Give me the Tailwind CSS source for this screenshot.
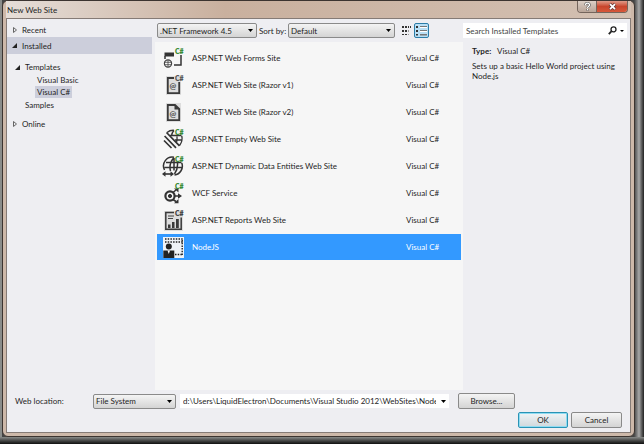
<!DOCTYPE html>
<html lang="en">
<head>
  <meta charset="UTF-8">
  <meta name="viewport" content="width=device-width, initial-scale=1.0">
  <title>New Web Site</title>
  <script src="https://cdn.jsdelivr.net/npm/@tailwindcss/browser@4"></script>
</head>
<body class="flex min-h-screen flex-col bg-linear-to-t from-[#111] to-[#8a8c8a] to-[7px] pb-[7px] pl-[2px] font-[Lato,'Open_Sans',sans-serif] text-[8px] leading-[12px] text-[#1e1e1e]">
  <div class="flex flex-1 bg-linear-to-l from-[#222] via-[#aaa] via-[5px] to-[#444] to-[10px] pr-[9px]">
    <!-- Window frame -->
    <div class="flex flex-1 flex-col rounded-md border border-[#3c3430] bg-[#cdb8a9] px-[3px] pb-[3px]">
      <header class="flex h-[17px] items-start justify-between bg-linear-to-r from-[#e6ded8] via-[#c9b09e] via-35% to-[#d3c0b2]">
        <h1 class="pt-[3px] pl-[1px]">New Web Site</h1>
        <div class="mr-[3px] flex h-[12px] overflow-hidden rounded-b-sm border border-t-0 border-[#74655c]">
          <button type="button" aria-label="Help" class="flex w-[19px] items-center justify-center border-r border-[#74655c] bg-linear-to-b from-[#dccfc6] to-[#b9a598]">
            <svg class="size-[9px]" viewBox="0 0 9 9" fill="none"><path d="M2.5 3.2C2.5 .6 6.6 .6 6.6 3 6.6 4.4 4.6 4.3 4.6 6M4.6 7V8.4" stroke="#555" stroke-width="2.4"/><path d="M2.5 3.2C2.5 .6 6.6 .6 6.6 3 6.6 4.4 4.6 4.3 4.6 6M4.6 7V8.2" stroke="#fff" stroke-width="1.3"/></svg>
          </button>
          <button type="button" aria-label="Close" class="flex w-[30px] items-center justify-center bg-linear-to-b from-[#e09a88] via-[#c8452c] to-[#d8583a]">
            <svg class="size-[9px]" viewBox="0 0 9 9"><path d="M1.8 2 7.2 7.4M7.2 2 1.8 7.4" stroke="#6b3a34" stroke-width="3.2"/><path d="M2 2.2 7 7.2M7 2.2 2 7.2" stroke="#fff" stroke-width="1.8"/></svg>
          </button>
        </div>
      </header>

      <main class="flex flex-1 flex-col border border-[#857b76] bg-[#eeeef2]">
        <div class="flex flex-1">
          <!-- Category tree -->
          <nav class="flex w-[145px] flex-none flex-col items-stretch pt-[3px]">
            <button type="button" class="flex h-[15px] items-center gap-[5px] pl-[6px]">
              <svg class="h-[6px] w-[4px]" viewBox="0 0 4 6" fill="none"><path d="M.5 .5 3.5 3 .5 5.5Z" stroke="#666"/></svg>Recent
            </button>
            <button type="button" class="flex h-[17px] items-center gap-[5px] bg-[#cccedb] pl-[5px]">
              <svg class="size-[5px]" viewBox="0 0 5 5"><path d="M5 0V5H0Z" fill="#222"/></svg>Installed
            </button>
            <ul class="flex flex-col items-start pt-[7px] pb-[6px]">
              <li><button type="button" class="flex h-[12px] items-center gap-[5px] pl-[8px]"><svg class="size-[5px]" viewBox="0 0 5 5"><path d="M5 0V5H0Z" fill="#222"/></svg>Templates</button>
                <ul class="pl-[28px]">
                  <li><button type="button" class="block h-[13px] px-[2px]">Visual Basic</button></li>
                  <li><button type="button" class="block h-[12px] bg-[#cccedb] px-[2px]">Visual C#</button></li>
                </ul>
              </li>
              <li><button type="button" class="block h-[13px] pl-[18px]">Samples</button></li>
            </ul>
            <button type="button" class="flex h-[14px] items-center gap-[5px] pl-[6px]">
              <svg class="h-[6px] w-[4px]" viewBox="0 0 4 6" fill="none"><path d="M.5 .5 3.5 3 .5 5.5Z" stroke="#666"/></svg>Online
            </button>
          </nav>

          <!-- Template list -->
          <section class="ml-[3px] flex flex-1 flex-col">
            <div class="flex h-[23px] items-center pl-[2px]">
              <div class="grid w-[100px] items-center">
                <select aria-label="Framework" class="col-start-1 row-start-1 h-[15px] appearance-none rounded-xs border border-[#8a8a8a] bg-linear-to-b from-[#f4f4f4] to-[#d4d4d4] pl-[2px]"><option>.NET Framework 4.5</option></select>
                <svg class="pointer-events-none col-start-1 row-start-1 mr-[4px] h-[3px] w-[5px] justify-self-end" viewBox="0 0 5 3"><path d="M0 0H5L2.5 3Z"/></svg>
              </div>
              <label for="sort" class="w-[31px] pl-[2px] whitespace-nowrap">Sort by:</label>
              <div class="grid w-[107px] items-center">
                <select id="sort" class="col-start-1 row-start-1 h-[15px] appearance-none rounded-xs border border-[#8a8a8a] bg-linear-to-b from-[#f4f4f4] to-[#d4d4d4] pl-[2px]"><option>Default</option></select>
                <svg class="pointer-events-none col-start-1 row-start-1 mr-[4px] h-[3px] w-[5px] justify-self-end" viewBox="0 0 5 3"><path d="M0 0H5L2.5 3Z"/></svg>
              </div>
              <button type="button" aria-label="Small icons" class="ml-[4px] flex size-[15px] items-center justify-center">
                <svg class="size-[11px]" viewBox="0 0 11 11" fill="#333"><path d="M1 1H3V3H1ZM4 1H6V3H4ZM7 1H8V3H7ZM9 1H10V3H9ZM1 5H3V7H1ZM4 5H6V7H4ZM1 9H3V10H1ZM4 9H6V10H4Z"/><path d="M7 5H8V7H7ZM7 9H8V10H7Z" fill="#999"/></svg>
              </button>
              <button type="button" aria-label="Medium icons" class="flex size-[15px] items-center justify-center rounded-xs border border-[#2c7da8] bg-[#b9dff5]">
                <svg class="size-[11px]" viewBox="0 0 11 11" fill="#333"><path d="M0 1H2V3H0ZM0 5H2V7H0ZM0 9H2V10.5H0Z"/><path d="M4 1H11V3H4ZM4 5H11V7H4ZM4 9H11V10.5H4Z" fill="#777"/><path d="M4 2H11V3H4ZM4 6H11V7H4Z" fill="#fff"/></svg>
              </button>
            </div>
            <ul class="flex-1 bg-[#f6f6f6] pt-[2px] pl-[2px]">
              <li><button type="button" class="grid h-[27px] w-full grid-cols-[30px_1fr_57px] items-center pl-[5px] text-left">
                <svg class="size-[24px]" viewBox="0 0 24 24" fill="none"><path d="M2.5 6.5H12V10.5H2.5Z" fill="#333"/><path d="M3 10V13M19 9V19H12" stroke="#333" stroke-width="1.5"/><circle cx="6" cy="17.5" r="3.6" stroke="#444" stroke-width="1.2"/><path d="M2.5 16.3H9.5M2.5 18.7H9.5M6 14V21" stroke="#444" stroke-width=".8"/><text x="13" y="8" font-size="7" font-weight="800" fill="#388a34">C#</text></svg>
                <span>ASP.NET Web Forms Site</span><span>Visual C#</span></button></li>
              <li><button type="button" class="grid h-[27px] w-full grid-cols-[30px_1fr_57px] items-center pl-[5px] text-left">
                <svg class="size-[24px]" viewBox="0 0 24 24" fill="none"><path d="M4 3H19V22H4Z" fill="#ddd"/><path d="M12 5H5.8V20.2H17.2V9" stroke="#3a3a3a" stroke-width="1.8"/><text x="7.5" y="16" font-size="8" font-weight="700" fill="#444">@</text><text x="13" y="8" font-size="7" font-weight="800" fill="#555">C#</text></svg>
                <span>ASP.NET Web Site (Razor v1)</span><span>Visual C#</span></button></li>
              <li><button type="button" class="grid h-[27px] w-full grid-cols-[30px_1fr_57px] items-center pl-[5px] text-left">
                <svg class="size-[24px]" viewBox="0 0 24 24" fill="none"><path d="M4 3H19V22H4Z" fill="#ddd"/><path d="M5.8 5H13L17.2 9V20.2H5.8Z" stroke="#3a3a3a" stroke-width="1.8"/><path d="M12.5 4.5 17.5 9.5H12.5Z" fill="#3a3a3a"/><text x="7.5" y="17" font-size="8" font-weight="700" fill="#444">@</text></svg>
                <span>ASP.NET Web Site (Razor v2)</span><span>Visual C#</span></button></li>
              <li><button type="button" class="grid h-[27px] w-full grid-cols-[30px_1fr_57px] items-center pl-[5px] text-left">
                <svg class="size-[24px]" viewBox="0 0 24 24" fill="none" stroke="#333" stroke-width="1.3"><path d="M5 5.5Q8 3 12 3.3M19.8 9Q21 14 17.5 18.5M12 3.5Q9.5 6 9.5 9M8 8.5H19.5M13 13H20M15 9.5Q15.3 13 14.6 15"/><path d="M2.6 9 14 20.8M2 13.5 9.5 21M4.5 5.5 17.5 18.8" stroke-width="1.7"/><text x="13" y="8" font-size="7" font-weight="800" fill="#388a34" stroke="none">C#</text></svg>
                <span>ASP.NET Empty Web Site</span><span>Visual C#</span></button></li>
              <li><button type="button" class="grid h-[27px] w-full grid-cols-[30px_1fr_57px] items-center pl-[5px] text-left">
                <svg class="size-[24px]" viewBox="0 0 24 24" fill="none" stroke="#333" stroke-width="1.5"><path d="M12 3.3A8.8 8.8 0 0 0 2.5 16M19.8 9A9 9 0 0 1 12.5 21M12 3.5Q6.5 10 8.5 17M4 8.5H19.5M2.5 13.5H20M12 4V16.5M15.5 9Q16 15 12.5 20"/><path d="M3 20H10" stroke-width="1.6"/><path d="M0 20 3.5 17.3V22.7ZM12 20 8.5 17.3V22.7Z" fill="#333" stroke="none"/><text x="13" y="8" font-size="7" font-weight="800" fill="#388a34" stroke="none">C#</text></svg>
                <span>ASP.NET Dynamic Data Entities Web Site</span><span>Visual C#</span></button></li>
              <li><button type="button" class="grid h-[27px] w-full grid-cols-[30px_1fr_57px] items-center pl-[5px] text-left">
                <svg class="size-[24px]" viewBox="0 0 24 24" fill="none" stroke="#333"><circle cx="8" cy="15" r="4.6" stroke-width="2.2"/><circle cx="8" cy="15" r="1.6" fill="#333"/><path d="M12 15H17M11 11.5 14 9M11 18.5 14 20.5" stroke-width="1.6"/><path d="M20 15 16 12.3V17.7ZM12 7.5H16.5V11.5ZM16.5 18V22.3H12Z" fill="#333" stroke="none"/><text x="13" y="8" font-size="7" font-weight="800" fill="#388a34" stroke="none">C#</text></svg>
                <span>WCF Service</span><span>Visual C#</span></button></li>
              <li><button type="button" class="grid h-[27px] w-full grid-cols-[30px_1fr_57px] items-center pl-[5px] text-left">
                <svg class="size-[24px]" viewBox="0 0 24 24" fill="none"><path d="M2 3H21V23H2Z" fill="#ddd"/><path d="M12 4.5H3.8V21.2H19.2V9.5" stroke="#3a3a3a" stroke-width="1.5"/><path d="M6 8H12M6 10.5H11" stroke="#444"/><path d="M6 16.5H8.5V20H6ZM10 14H12.5V20H10ZM14 11H16.8V20H14Z" fill="#3a3a3a"/><text x="13" y="8" font-size="7" font-weight="800" fill="#444">C#</text></svg>
                <span>ASP.NET Reports Web Site</span><span>Visual C#</span></button></li>
              <li class="pt-[1px] pr-[2px]"><button type="button" class="grid h-[26px] w-full grid-cols-[30px_1fr_55px] items-center bg-[#3399ff] pl-[5px] text-left text-white">
                <svg class="size-[24px]" viewBox="0 0 24 24" fill="none"><path d="M1 2H22V23H1Z" fill="#f0f3f7"/><path d="M3 4H21M3 7H21M13 19.5H21" stroke="#222" stroke-width="1.4" stroke-dasharray="1.5 1.2"/><path d="M20.2 5V20" stroke="#222" stroke-width="1.4" stroke-dasharray="1.5 1.2"/><circle cx="6.8" cy="11.5" r="3" fill="#222"/><path d="M1.3 15.5H12.3V23H1.3Z" fill="#222"/><path d="M5.5 15.5H8L6.8 19Z" fill="#fff"/></svg>
                <span>NodeJS</span><span>Visual C#</span></button></li>
            </ul>
          </section>

          <!-- Search and details -->
          <aside class="mr-[3px] w-[164px] flex-none pt-[4px]">
            <div class="flex h-[15px] items-center bg-white pr-[3px]">
              <input type="search" aria-label="Search Installed Templates" placeholder="Search Installed Templates" class="min-w-0 flex-1 pl-[3px] outline-none placeholder:text-[#444]">
              <button type="button" aria-label="Search" class="flex items-center gap-[3px]">
                <svg class="size-[9px]" viewBox="0 0 9 9" fill="none" stroke="#222"><circle cx="5.5" cy="3.3" r="2.5" stroke-width="1.3"/><path d="M3.6 5.2 .8 8.2" stroke-width="1.8"/></svg>
                <svg class="h-[2px] w-[4px]" viewBox="0 0 4 2"><path d="M0 0H4L2 2Z"/></svg>
              </button>
            </div>
            <p class="pt-[7px] pl-[9px]"><strong class="mr-[4px]">Type:</strong> Visual C#</p>
            <p class="pt-[4px] pl-[9px] leading-[10px]">Sets up a basic Hello World project using Node.js</p>
          </aside>
        </div>

        <!-- Location -->
        <footer class="flex flex-col pb-[4px]">
          <div class="flex h-[22px] items-center pl-[8px]">
            <label for="location" class="w-[78px]">Web location:</label>
            <div class="grid w-[83px] items-center">
              <select id="location" class="col-start-1 row-start-1 h-[15px] appearance-none rounded-xs border border-[#8a8a8a] bg-linear-to-b from-[#f4f4f4] to-[#d4d4d4] pl-[2px]"><option>File System</option></select>
              <svg class="pointer-events-none col-start-1 row-start-1 mr-[4px] h-[3px] w-[5px] justify-self-end" viewBox="0 0 5 3"><path d="M0 0H5L2.5 3Z"/></svg>
            </div>
            <div class="ml-[4px] flex h-[14px] flex-1 items-center bg-white pr-[3px]">
              <input type="text" aria-label="Path" value="d:\Users\LiquidElectron\Documents\Visual Studio 2012\WebSites\NodeJSWebSite1" class="min-w-0 flex-1 pl-[3px] outline-none">
              <button type="button" aria-label="Recent locations" class="pl-[5px]"><svg class="h-[3px] w-[5px]" viewBox="0 0 5 3"><path d="M0 0H5L2.5 3Z"/></svg></button>
            </div>
            <button type="button" class="mr-[115px] ml-[9px] h-[16px] w-[57px] rounded-xs border border-[#8a8a8a] bg-linear-to-b from-[#f4f4f4] to-[#d4d4d4]">Browse...</button>
          </div>
          <div class="flex justify-end gap-[3px] pr-[8px]">
            <button type="button" class="h-[16px] w-[50px] rounded-xs border border-[#2a93b5] bg-linear-to-b from-[#f0f4f6] to-[#d0d8dc] inset-ring inset-ring-[#8fdcf2]">OK</button>
            <button type="button" class="h-[16px] w-[51px] rounded-xs border border-[#8a8a8a] bg-linear-to-b from-[#f4f4f4] to-[#d4d4d4]">Cancel</button>
          </div>
        </footer>
      </main>
    </div>
  </div>
</body>
</html>
